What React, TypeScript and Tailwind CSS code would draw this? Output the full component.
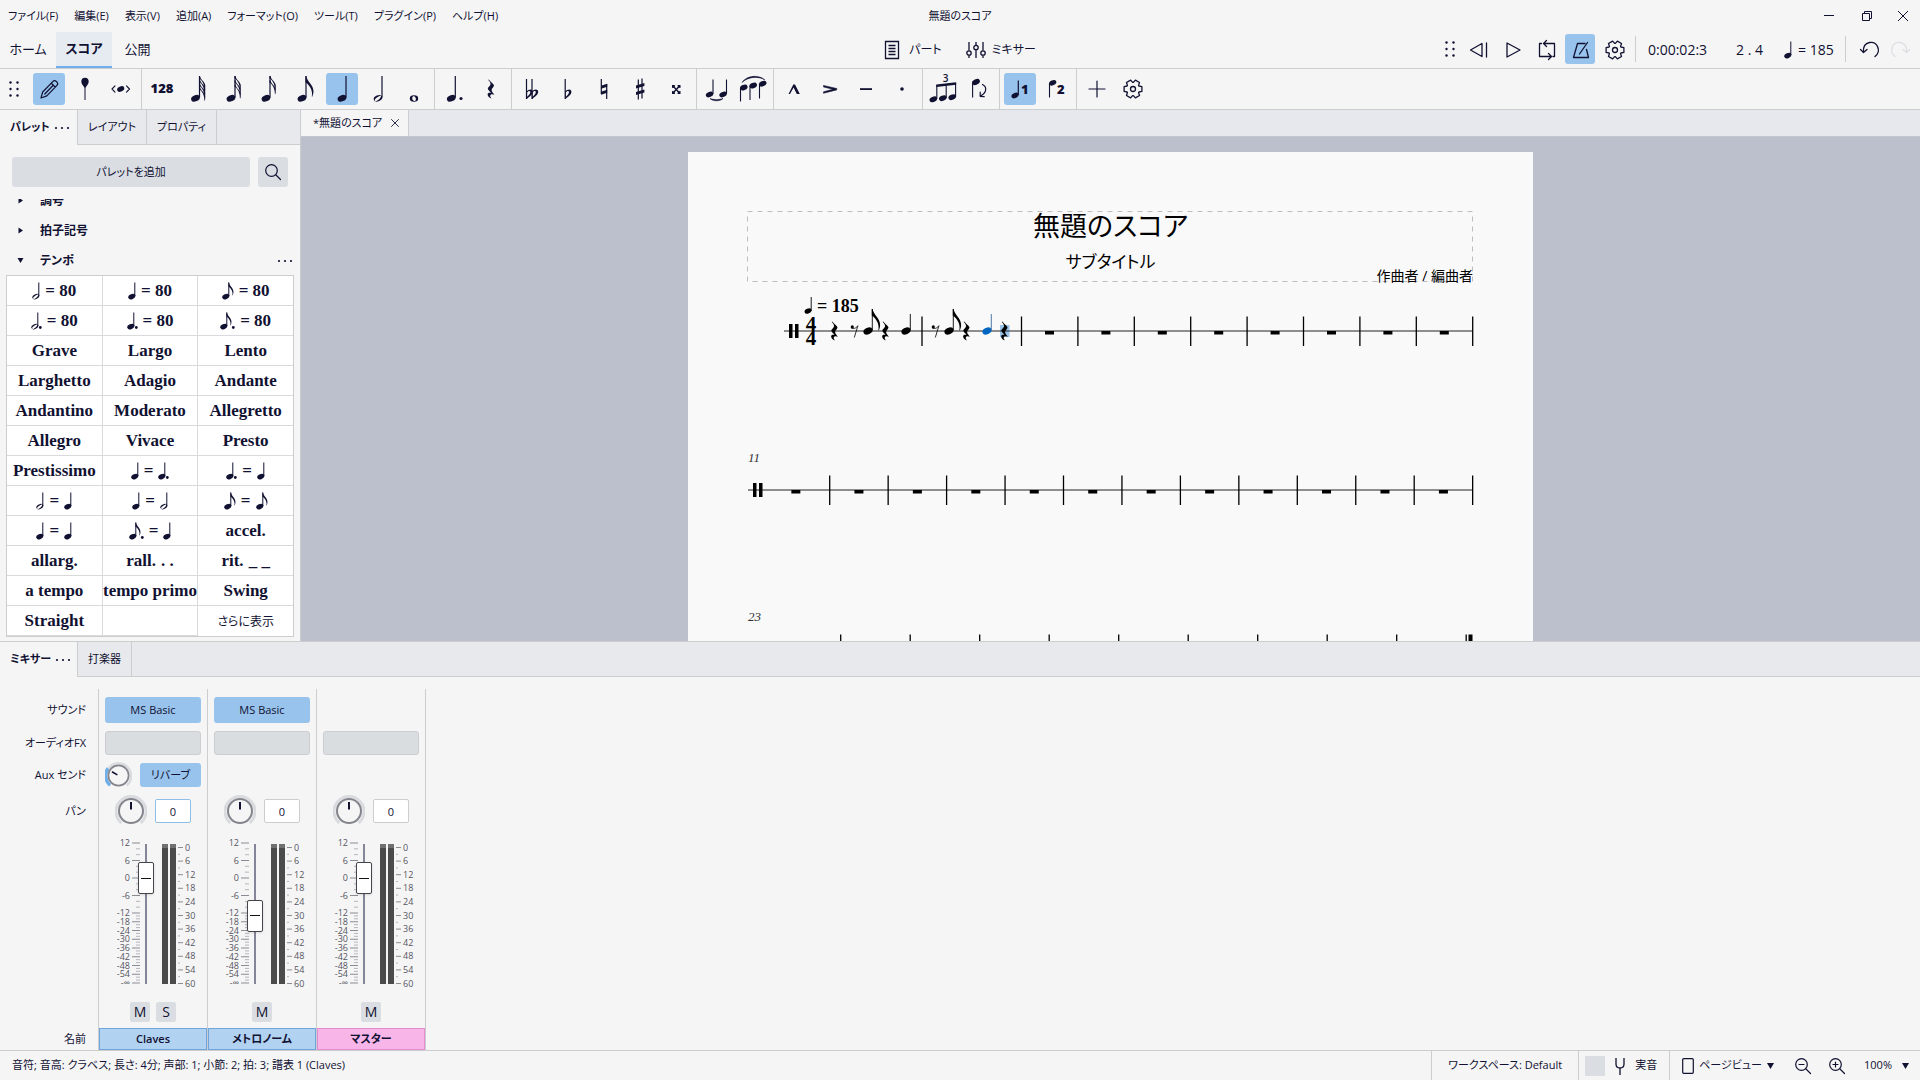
import React from 'react';
import { X } from 'lucide-react';

type NoteKind = 'whole' | 'half' | 'quarter' | 'eighth';

/* ---------- music glyphs ---------- */

const Head = ({ x, y, s = 1, open = false }: { x: number; y: number; s?: number; open?: boolean }) => (
  <g transform={`translate(${x} ${y}) rotate(-24) scale(${s})`}>
    {open ? (
      <path fillRule="evenodd" d="M-4.7 0a4.7 3.1 0 1 0 9.4 0a4.7 3.1 0 1 0 -9.4 0ZM-3.9 .5C-3.9 -.8 2 -2 3.7 -1.3C4.6 .4 -2.4 3 -3.7 1.7Z" />
    ) : (
      <ellipse rx="4.8" ry="3.2" />
    )}
  </g>
);

const Stem = ({ x, y1, y2, w = 1.2 }: { x: number; y1: number; y2: number; w?: number }) => (
  <path d={`M${x} ${y1}V${y2}`} stroke="currentColor" strokeWidth={w} fill="none" />
);

const Flag = ({ x, y, s = 1 }: { x: number; y: number; s?: number }) => (
  <path
    transform={`translate(${x} ${y}) scale(${s})`}
    d="M-.5 0H.4C.8 5.5 7.800 9 7.800 16C7.800 18 7.200 20 6.500 21.500L6 21.300C7.200 16.500 5 10.500 -.5 6.500Z"
  />
);

const QuarterRest = ({ x, y, s = 1 }: { x: number; y: number; s?: number }) => (
  <path
    transform={`translate(${x} ${y}) scale(${s})`}
    d="M-2.200 -9.500C-1 -7.500 3 -4.800 3 -3.600C3 -2 .6 -1 .6 1C.6 3 3 4.800 3.400 5.800C1.500 4.900 -.8 5 -.8 6.900C-.8 8 .2 8.900 .8 9.600C-1.500 9 -3.400 7.300 -3.400 5.300C-3.400 3.900 -2 3.300 0 3.800C-1 2.500 -3.200 .8 -3.200 -.6C-3.200 -2 -.4 -3 -.4 -5C-.4 -6.500 -1.800 -8 -2.800 -9Z"
  />
);

const EighthRest = ({ x, y }: { x: number; y: number }) => (
  <g transform={`translate(${x} ${y})`}>
    <circle cx="-2.200" cy="-3.600" r="1.600" />
    <path d="M-3.400 -2.800C-1.500 -1.200 1.500 -2 3.400 -4.800L-.2 7" fill="none" stroke="currentColor" strokeWidth=".8" />
  </g>
);

const InlineNote = ({ kind, dot = false }: { kind: NoteKind; dot?: boolean }) => {
  const w = (kind === 'eighth' ? 12 : 8) + (dot ? 3 : 0);
  return (
    <svg width={w} height="18" viewBox={`0 0 ${w} 18`} fill="currentColor" className="shrink-0">
      <Head x={3.8} y={14.6} s={0.78} open={kind === 'half'} />
      <Stem x={6.8} y1={0.5} y2={14} w={1} />
      {kind === 'eighth' && <Flag x={6.8} y={0.5} s={0.6} />}
      {dot && <circle cx={w - 1.7} cy="15.500" r="1.400" />}
    </svg>
  );
};

/* ---------- toolbar icons, all on a 32px box ---------- */

const Icon = ({ children }: { children: React.ReactNode }) => (
  <svg width="32" height="32" viewBox="0 0 32 32" fill="currentColor" className="overflow-visible">
    {children}
  </svg>
);

const Line = ({ d, w = 1.3 }: { d: string; w?: number }) => (
  <path d={d} fill="none" stroke="currentColor" strokeWidth={w} strokeLinecap="round" strokeLinejoin="round" />
);

const Flagged = ({ flags }: { flags: number }) => {
  const x = flags > 3 ? 17.5 : flags > 2 ? 17 : 16;
  const step = flags > 3 ? 3.6 : 4.2;
  return (
    <Icon>
      <Head x={x - 4} y={25.3} s={0.95} />
      <Stem x={x} y1={3} y2={24.5} />
      {flags === 1 ? (
        <Flag x={x} y={3} s={0.96} />
      ) : (
        Array.from({ length: flags }, (_, i) => (
          <path
            key={i}
            transform={`translate(${x} ${3 + i * step})`}
            d="M-.5 0H.5C1 4 5.500 5.500 5.800 9.500C5.900 11 5.700 12.500 5.400 14L4.900 13.800C5 9 3 4.500 -.5 2.200Z"
          />
        ))
      )}
    </Icon>
  );
};

const gearPath = (r: number) => {
  const pts: string[] = [];
  for (let k = 0; k < 6; k++) {
    [[-27, 0.72], [-15, 1], [15, 1], [27, 0.72]].forEach(([a, f]) => {
      const t = ((k * 60 + a) * Math.PI) / 180;
      pts.push(`${(16 + r * f * Math.cos(t)).toFixed(2)} ${(16 + r * f * Math.sin(t)).toFixed(2)}`);
    });
  }
  return `M${pts.join('L')}Z`;
};

const GearIcon = () => (
  <Icon>
    <Line d={gearPath(9.2)} />
    <circle cx="16" cy="16" r="2.500" fill="none" stroke="currentColor" strokeWidth="1.300" />
  </Icon>
);

const Flat = ({ x }: { x: number }) => (
  <g transform={`translate(${x} 0)`}>
    <path d="M0 6V26" stroke="currentColor" strokeWidth="1.200" />
    <path fillRule="evenodd" d="M0 18.500C2 16.200 6 15.500 6.200 18.800C6.300 21.800 3 23.500 0 26.200ZM.6 19.500V23.800C2.500 22 4 20.500 3.800 18.800C3.500 17.200 1.500 18 .6 19.500Z" />
  </g>
);

const durationIcons: [string, React.ReactNode][] = [
  ['64分音符', <Flagged flags={4} />],
  ['32分音符', <Flagged flags={3} />],
  ['16分音符', <Flagged flags={2} />],
  ['8分音符', <Flagged flags={1} />],
  ['4分音符', <Icon><Head x={16} y={25.300} s={0.95} /><Stem x={20} y1={3} y2={24.500} /></Icon>],
  ['2分音符', <Icon><Head x={16} y={25.300} s={0.95} open /><Stem x={20} y1={3} y2={24.500} /></Icon>],
  ['全音符', <Icon><path fillRule="evenodd" d="M11.800 25.500a4.200 3.200 0 1 0 8.400 0a4.200 3.200 0 1 0 -8.400 0ZM14.300 24.500C14.800 22.500 17 23 17.700 25C18.300 27 17.500 28.200 16.300 28C14.800 27.700 14 26 14.300 24.500Z" /></Icon>],
];

const dotIcons: [string, React.ReactNode][] = [
  ['付点', <Icon><Head x={12.300} y={25.300} s={0.95} /><Stem x={16.300} y1={3} y2={24.500} /><circle cx="22" cy="25.500" r="1.600" /></Icon>],
  ['休符', <Icon><QuarterRest x={16} y={16} /></Icon>],
];

const accidentalIcons: [string, React.ReactNode][] = [
  ['ダブルフラット', <Icon><Flat x={10.500} /><Flat x={16} /></Icon>],
  ['フラット', <Icon><Flat x={13.200} /></Icon>],
  ['ナチュラル', <Icon><path d="M13.300 6V21M18.700 11V26" stroke="currentColor" strokeWidth="1.200" /><path d="M13 12.800L19.200 10.800V13.800L13 15.800ZM13 18.800L19.200 16.800V19.800L13 21.800Z" /></Icon>],
  ['シャープ', <Icon><path d="M14.300 6.500V26.500M18 5.500V25.500" stroke="currentColor" strokeWidth="1.200" /><path d="M12 12.600L20.400 10V13L12 15.600ZM12 19L20.400 16.400V19.400L12 22Z" /></Icon>],
  ['ダブルシャープ', <Icon><path d="M13 13L19.500 20M19.500 13L13 20" stroke="currentColor" strokeWidth="1.400" /><path d="M12 12H15L14.500 14.500L12 15ZM20.500 12H17.500L18 14.500L20.500 15ZM12 21H15L14.500 18.500L12 18ZM20.500 21H17.500L18 18.500L20.500 18Z" /></Icon>],
];

const slurIcons: [string, React.ReactNode][] = [
  ['タイ', <Icon><Head x={8.500} y={21.500} s={0.8} /><Stem x={12} y1={6.500} y2={21} w={1.100} /><Head x={22} y={21.500} s={0.8} /><Stem x={25.500} y1={6.500} y2={21} w={1.100} /><path d="M9 25.500C12 28.500 19 28.500 22 25.500C19 27 12 27 9 25.500Z" stroke="currentColor" strokeWidth=".6" /></Icon>],
  ['スラー', <Icon><Head x={6.800} y={14.500} s={0.82} /><Stem x={3.500} y1={15} y2={28.500} w={1.100} /><Head x={16.200} y={12.500} s={0.82} /><Stem x={13} y1={13} y2={27} w={1.100} /><Head x={25.700} y={10.700} s={0.82} /><Stem x={22.500} y1={11} y2={25.500} w={1.100} /><path d="M5 9.500C10 2 22 1.500 28 7C22 3 11 3.500 5 9.500Z" stroke="currentColor" strokeWidth=".5" /></Icon>],
];

const articulationIcons: [string, React.ReactNode][] = [
  ['マルカート', <Icon><path d="M10.500 21L15.300 11.600H17L21.800 21H18.800L15.600 14.600L12 21Z" /></Icon>],
  ['アクセント', <Icon><path d="M9.500 12.400L22.800 15.500V16.900L9.500 20.300V18.800L18.800 16.300L9.500 14Z" stroke="currentColor" strokeWidth=".5" /></Icon>],
  ['テヌート', <Icon><path d="M10 15.200H22V17H10Z" /></Icon>],
  ['スタッカート', <Icon><circle cx="16" cy="16" r="1.800" /></Icon>],
];

const tupletIcons: [string, React.ReactNode][] = [
  ['連符', (
    <Icon>
      <text x="18.500" y="9" textAnchor="middle" className="text-[10px] font-semibold">3</text>
      <Head x={6.300} y={26.300} s={0.82} /><Stem x={9.800} y1={12} y2={26} w={1.100} />
      <Head x={15.800} y={25.200} s={0.82} /><Stem x={19.200} y1={11} y2={25} w={1.100} />
      <Head x={25.200} y={24.200} s={0.82} /><Stem x={28.600} y1={10} y2={24} w={1.100} />
      <path d="M9.300 11.400L29.100 9.200V11.700L9.300 13.900Z" />
    </Icon>
  )],
  ['向きを反転', (
    <Icon>
      <Head x={13} y={9} s={0.85} /><Stem x={9.600} y1={9.500} y2={24.500} w={1.100} />
      <Line d="M19.500 11.500C24.500 14 23.500 20 17.500 23M17.200 19V23.300L21.200 23.600" w={1.200} />
    </Icon>
  )],
];

const voiceIcons: [string, React.ReactNode][] = [
  ['声部1', <Icon><Head x={11} y={22.500} s={0.78} /><Stem x={14.300} y1={7.500} y2={22} w={1.200} /><text x="17" y="21" className="text-[13px] font-extrabold">1</text></Icon>],
  ['声部2', <Icon><Head x={12.700} y={9.800} s={0.78} /><Stem x={9.500} y1={10} y2={24.500} w={1.100} /><text x="17" y="21" className="text-[13px] font-extrabold">2</text></Icon>],
];

const inputIcons: [string, React.ReactNode][] = [
  ['音符入力', <Icon><Line d="M8 25L9.700 19L20 8.400Q21.500 6.900 23.600 8.700Q25.600 10.700 24 12.300L13.800 22.900ZM18.300 10.200L22.200 14M11.800 21L20 12.500" w={1.200} /></Icon>],
  ['入力モード', <Icon><path d="M12.300 8.700A3.700 3.900 0 0 1 19.700 8.700C19.700 11 17.800 12.500 16.700 14.500H15.300C14.200 12.500 12.300 11 12.300 8.700Z" /><path d="M16 13V27" stroke="currentColor" strokeWidth="1" /></Icon>],
  ['リズム', <Icon><Line d="M10 12.800L7 16L10 19.200M21.500 12.800L24.500 16L21.500 19.200" w={1.100} /><Head x={15.700} y={16} s={0.78} /></Icon>],
];

/* ---------- shared bits ---------- */

const ToolGroup = ({ items, active }: { items: [string, React.ReactNode][]; active?: number }) => (
  <div className="flex items-center gap-1 px-1 border-r border-[#cbcdcf] h-full">
    {items.map(([label, icon], i) => (
      <button key={label} aria-label={label} className={`size-8 rounded-[3px] ${i === active ? 'bg-[#97c3ec]' : ''}`}>
        {icon}
      </button>
    ))}
  </div>
);

const Grip = () => (
  <svg width="10" height="16" viewBox="0 0 10 16" fill="currentColor">
    {[1.5, 8, 14.5].map((y) => [1.5, 8.5].map((x) => <circle key={`${x}-${y}`} cx={x} cy={y} r="1.200" />))}
  </svg>
);

const Dots = () => (
  <svg width="16" height="4" viewBox="0 0 16 4" fill="currentColor" className="shrink-0">
    <circle cx="2" cy="2" r="1.100" /><circle cx="8" cy="2" r="1.100" /><circle cx="14" cy="2" r="1.100" />
  </svg>
);

const Tri = () => (
  <svg width="7" height="6" viewBox="0 0 7 6" fill="currentColor"><path d="M0 0H7L3.500 6Z" /></svg>
);

const Magnifier = ({ sign }: { sign?: 'plus' | 'minus' }) => (
  <svg width="18" height="18" viewBox="0 0 18 18" fill="none" stroke="currentColor" strokeWidth="1.200" strokeLinecap="round">
    <circle cx="7.500" cy="7.500" r="5.800" />
    <path d="M12 12L16.500 16.500" />
    {sign && <path d="M5 7.500H10" />}
    {sign === 'plus' && <path d="M7.500 5V10" />}
  </svg>
);

/* ---------- header ---------- */

const menus = ['ファイル(F)', '編集(E)', '表示(V)', '追加(A)', 'フォーマット(O)', 'ツール(T)', 'プラグイン(P)', 'ヘルプ(H)'];

const TitleBar = () => (
  <header className="h-8 grid grid-cols-[1fr_auto_1fr] items-center text-[11px]">
    <nav className="flex">
      {menus.map((m) => (
        <button key={m} className="px-2 whitespace-nowrap">{m}</button>
      ))}
    </nav>
    <h1>無題のスコア</h1>
    <div className="flex justify-end">
      <button aria-label="最小化" className="w-[38px] grid place-items-center"><svg width="12" height="12" viewBox="0 0 12 12"><path d="M1 5.500H11" stroke="currentColor" /></svg></button>
      <button aria-label="元に戻す" className="w-[38px] grid place-items-center"><svg width="12" height="12" viewBox="0 0 12 12" fill="none" stroke="currentColor"><path d="M1.500 3.500H8.500V10.500H1.500ZM3.500 3.500V1.500H10.500V8.500H8.500" /></svg></button>
      <button aria-label="閉じる" className="w-[34px] grid place-items-center"><svg width="12" height="12" viewBox="0 0 12 12" stroke="currentColor"><path d="M1 1L11 11M11 1L1 11" /></svg></button>
    </div>
  </header>
);

const transport: [string, React.ReactNode][] = [
  ['巻き戻し', <Icon><Line d="M19 9.500V22.500L7.500 16ZM23.500 9V23" /></Icon>],
  ['再生', <Icon><Line d="M10 9V23L23 16Z" /></Icon>],
  ['ループ', <Icon><Line d="M10.500 9.500H8.500V22.500H19M22 22.500H23.500V9.500H12.500M15.500 6.500L12.500 9.500L15.500 12.500M17.500 19.500L20.500 22.500L17.500 25.500" /></Icon>],
  ['メトロノーム', <Icon><Line d="M20 9.500H12.500L8.500 23.500H23.500L21.500 15.500M14.500 20L22.500 8.500" /></Icon>],
  ['再生設定', <GearIcon />],
];

const MainBar = () => (
  <div className="h-[37px] grid grid-cols-[1fr_auto_1fr] border-b border-[#cbcdcf] text-[13px]">
    <div className="flex">
      <button className="w-14">ホーム</button>
      <button className="w-14 bg-[#e6ebf2] font-bold border-b-2 border-[#70afea]">スコア</button>
      <button className="w-[51px]">公開</button>
    </div>
    <div className="flex items-center gap-6 text-xs">
      <button className="flex items-center gap-[9px]">
        <svg width="16" height="20" viewBox="0 0 16 20" fill="none" stroke="currentColor" strokeWidth="1.300"><path d="M1.500 1.500H14.500V18.500H1.500ZM4.500 5.500H11.500M4.500 8.500H11.500M4.500 11.500H11.500M4.500 14.500H11.500" /></svg>
        パート
      </button>
      <button className="flex items-center gap-[6px]">
        <svg width="20" height="20" viewBox="0 0 20 20" fill="none" stroke="currentColor" strokeWidth="1.300"><path d="M3 2V10.500M3 15.500V18M10 2V5M10 10V18M17 2V10.500M17 15.500V18" /><circle cx="3" cy="13" r="2.200" /><circle cx="10" cy="7.500" r="2.200" /><circle cx="17" cy="13" r="2.200" /></svg>
        ミキサー
      </button>
    </div>
    <div className="flex items-center justify-end pr-[6px] pb-[2px]">
      <Grip />
      <div className="flex gap-1 ml-2 mr-[6px]">
        {transport.map(([label, icon]) => (
          <button key={label} aria-label={label} className={`size-[30px] grid place-items-center rounded-[3px] ${label === 'メトロノーム' ? 'bg-[#97c3ec]' : ''}`}>
            {icon}
          </button>
        ))}
      </div>
      <div className="h-[26px] border-l border-[#cbcdcf] flex items-center pl-3 pt-[2px] text-sm">
        <span className="w-[88px]">0:00:02:3</span>
        <span className="w-12 whitespace-pre">2 . 4</span>
        <span className="flex items-center gap-[6px] w-[61px] whitespace-nowrap"><InlineNote kind="quarter" />= 185</span>
      </div>
      <div className="h-[26px] border-l border-[#cbcdcf] flex items-center pl-2">
        <button aria-label="取り消し" className="size-[30px] grid place-items-center"><Icon><Line d="M21 22.500C28 17 23 7 15.500 8.500C11.500 9.300 9 12.500 9.500 18M6.500 15.500L9.500 18.500L13 15.500" /></Icon></button>
        <button aria-label="やり直し" className="size-[30px] grid place-items-center text-[#dedfe3]"><Icon><Line d="M11 22.500C4 17 9 7 16.500 8.500C20.500 9.300 23 12.500 22.500 18M25.500 15.500L22.500 18.500L19 15.500" /></Icon></button>
      </div>
    </div>
  </div>
);

const NoteBar = () => (
  <div className="h-[41px] flex items-center border-b border-[#cbcdcf]">
    <div className="pl-[9px] pr-[10px]"><Grip /></div>
    <ToolGroup items={inputIcons} active={0} />
    <div className="flex items-center h-full">
      <button className="w-8 ml-1 text-[13px] font-extrabold">128</button>
      <ToolGroup items={durationIcons} active={4} />
    </div>
    <ToolGroup items={dotIcons} />
    <ToolGroup items={accidentalIcons} />
    <ToolGroup items={slurIcons} />
    <ToolGroup items={articulationIcons} />
    <ToolGroup items={tupletIcons} />
    <ToolGroup items={voiceIcons} active={0} />
    <div className="flex gap-1 px-1">
      <button aria-label="追加" className="size-8"><Icon><Line d="M16 8V24M8 16H24" w={1.200} /></Icon></button>
      <button aria-label="ツールバー設定" className="size-8"><GearIcon /></button>
    </div>
  </div>
);

/* ---------- palettes ---------- */

type Part = string | { n: NoteKind; dot?: boolean };
const q: Part = { n: 'quarter' };
const qd: Part = { n: 'quarter', dot: true };
const h: Part = { n: 'half' };
const e: Part = { n: 'eighth' };

const tempoCells: Part[][] = [
  [h, '= 80'], [q, '= 80'], [e, '= 80'],
  [{ n: 'half', dot: true }, '= 80'], [qd, '= 80'], [{ n: 'eighth', dot: true }, '= 80'],
  ['Grave'], ['Largo'], ['Lento'],
  ['Larghetto'], ['Adagio'], ['Andante'],
  ['Andantino'], ['Moderato'], ['Allegretto'],
  ['Allegro'], ['Vivace'], ['Presto'],
  ['Prestissimo'], [q, '=', qd], [qd, '=', q],
  [h, '=', q], [q, '=', h], [e, '=', e],
  [q, '=', q], [{ n: 'eighth', dot: true }, '=', q], ['accel.'],
  ['allarg.'], ['rall.', '. .'], ['rit.', '_ _'],
  ['a tempo'], ['tempo primo'], ['Swing'],
  ['Straight'], [],
];

const PanelTabs = ({ tabs }: { tabs: string[] }) => (
  <div className="h-[35px] flex bg-[#e7e9ec] text-[11px]">
    {tabs.map((t, i) =>
      i === 0 ? (
        <div key={t} className="w-[78px] pl-[10px] flex items-center gap-1 bg-[#f5f5f6] border-r border-[#cbcdcf] whitespace-nowrap">
          <button className="font-bold">{t}</button>
          <button aria-label="パネルメニュー"><Dots /></button>
        </div>
      ) : (
        <button key={t} className="px-[10px] border-r border-b border-[#cbcdcf]">{t}</button>
      ),
    )}
    <div className="flex-1 border-b border-[#cbcdcf]" />
  </div>
);

const Palettes = () => (
  <aside className="w-[301px] shrink-0 flex flex-col border-r border-[#cbcdcf]">
    <PanelTabs tabs={['パレット', 'レイアウト', 'プロパティ']} />
    <div className="flex gap-2 px-3 pt-3 text-[11px]">
      <button className="flex-1 h-[30px] rounded-[3px] bg-[#dadee2]">パレットを追加</button>
      <button aria-label="検索" className="size-[30px] rounded-[3px] bg-[#dadee2] grid place-items-center"><Magnifier /></button>
    </div>
    <div className="flex-1 min-h-0 mt-3 px-[6px] overflow-hidden">
      <div className="-mt-[14px] text-xs font-bold">
        {['調号', '拍子記号', 'テンポ'].map((name) => (
          <div key={name} className="h-[30px] flex items-center pt-px pl-[11px] pr-[1px]">
            <button className="flex items-center gap-4">
              <svg width="7" height="7" viewBox="0 0 7 7" fill="currentColor">
                <path d={name === 'テンポ' ? 'M.5 1H6.500L3.500 6Z' : 'M1.500 .5L6 3.500L1.500 6.500Z'} />
              </svg>
              {name}
            </button>
            {name === 'テンポ' && <button aria-label="パレットメニュー" className="ml-auto"><Dots /></button>}
          </div>
        ))}
      </div>
      <div className="grid grid-cols-3 gap-px bg-[#d9dadc] border border-[#cbcdcf] font-['Liberation_Serif',serif] font-bold text-[17px] leading-5">
        {tempoCells.map((parts, i) => (
          <button key={i} aria-label={parts.length ? undefined : '空のセル'} className="h-[29px] pt-px bg-white flex items-center justify-center gap-[5px] whitespace-nowrap">
            {parts.map((p, j) => (typeof p === 'string' ? <span key={j}>{p}</span> : <InlineNote key={j} kind={p.n} dot={p.dot} />))}
          </button>
        ))}
        <button className="h-[30px] pt-px bg-white font-['Open_Sans','Noto_Sans_CJK_JP',sans-serif] font-normal text-xs">さらに表示</button>
      </div>
    </div>
  </aside>
);

/* ---------- score ---------- */

const MeasureRest = ({ x }: { x: number }) => <rect x={x - 4.5} y="49" width="9" height="3.500" />;
const Bar = ({ x }: { x: number }) => <path d={`M${x} 34.500V64`} stroke="currentColor" strokeWidth="1.300" />;

const System = ({ children, start = 0 }: { children: React.ReactNode; start?: number }) => (
  <svg viewBox="0 0 725 159" className="block w-full overflow-visible" fill="currentColor">
    <path d={`M${start} 49H725`} stroke="#222" strokeWidth="1" />
    <path d={`M${start + 5} 42h3.500v14h-3.500ZM${start + 11} 42h3.500v14h-3.500Z`} />
    {children}
  </svg>
);

const ScoreNote = ({ x, flag = false }: { x: number; flag?: boolean }) => (
  <>
    <Head x={x} y={49} />
    <Stem x={x + 4.3} y1={flag ? 27 : 32} y2={48} w={0.9} />
    {flag && <Flag x={x + 4.3} y={27} />}
  </>
);

const FirstSystem = () => (
  <System start={36}>
    <g transform="translate(60 29)">
      <Head x={0} y={0} s={0.75} /><Stem x={3.200} y1={-14} y2={0} w={0.9} />
    </g>
    <g className="font-['Liberation_Serif',serif] font-bold">
      <text x="69" y="30" className="text-[18px]">= 185</text>
      <text x="63" y="48.500" textAnchor="middle" className="text-[21px]">4</text>
      <text x="63" y="63" textAnchor="middle" className="text-[21px]">4</text>
    </g>
    <QuarterRest x={86.500} y={49} />
    <EighthRest x={106.500} y={48.500} />
    <ScoreNote x={120} flag />
    <QuarterRest x={137.500} y={49} />
    <ScoreNote x={158} />
    <Bar x={174} />
    <EighthRest x={187.500} y={48.500} />
    <ScoreNote x={201} flag />
    <QuarterRest x={218.500} y={49} />
    <g className="text-[#0065bf]">
      <g fill="currentColor"><Head x={239} y={49} /></g>
      <g className="text-[#3a6b9c]"><Stem x={243.300} y1={32} y2={48} w={0.9} /></g>
    </g>
    <rect x="252" y="43" width="9.500" height="12" fill="#9cc4ea" />
    <path d="M252 49H261.500" stroke="#222" />
    <QuarterRest x={256.500} y={49} />
    {Array.from({ length: 9 }, (_, i) => <Bar key={i} x={273.5 + i * 56.4} />)}
    {Array.from({ length: 8 }, (_, i) => <MeasureRest key={i} x={301.5 + i * 56.4} />)}
  </System>
);

const NumberedSystem = ({ number, bars, first, step, final = false }: { number: number; bars: number; first: number; step: number; final?: boolean }) => (
  <System>
    <text x="0" y="21" fill="#333" className="font-['Liberation_Serif',serif] italic text-[13px]">{number}</text>
    {Array.from({ length: bars }, (_, i) => (
      <React.Fragment key={i}>
        <Bar x={first + i * step} />
        <MeasureRest x={i === 0 ? (first + 14) / 2 : first + (i - 0.5) * step} />
      </React.Fragment>
    ))}
    {final && <rect x="720.500" y="34.500" width="4" height="29.500" />}
  </System>
);

const ScoreView = () => (
  <main className="flex-1 min-w-0 flex flex-col">
    <div className="h-[27px] flex bg-[#e6e8ed] border-b border-[#c3c6cc] text-[11px]">
      <div className="flex items-center gap-[6px] pl-3 pr-[6px] bg-[#f5f5f6] border-r border-[#cbcdcf]">
        <button>*無題のスコア</button>
        <button aria-label="タブを閉じる"><X size={14} strokeWidth={1.5} /></button>
      </div>
    </div>
    <div className="flex-1 min-h-0 overflow-hidden bg-[#bcc0cd] pt-[15px]">
      <article className="w-[845px] mx-auto bg-[#f9f9f9] text-black px-[60px] pt-[60px] pb-16">
        <div className="relative h-[70px] flex flex-col items-center">
          <svg className="absolute inset-0 size-full overflow-visible" fill="none" stroke="#bdbdbd" strokeDasharray="5 5">
            <rect x="-.5" y="-.5" width="100%" height="100%" />
          </svg>
          <h2 className="text-[27px] leading-7">無題のスコア</h2>
          <p className="text-[17px] leading-6 mt-[10px]">サブタイトル</p>
          <p className="absolute right-0 bottom-0 text-sm leading-3">作曲者 / 編曲者</p>
        </div>
        <FirstSystem />
        <NumberedSystem number={11} bars={12} first={81.7} step={58.45} />
        <NumberedSystem number={23} bars={10} first={92.7} step={69.5} final />
      </article>
    </div>
  </main>
);

/* ---------- mixer ---------- */

const Knob = ({ label, size, angle, filled = false }: { label: string; size: number; angle: number; filled?: boolean }) => (
  <label className="relative grid place-items-center">
    <svg width={size} height={size} viewBox="-16 -16 32 32" fill="none">
      <path d="M-9.700 12A15 15 0 1 1 9.700 12" stroke="#d9dbdf" strokeWidth="3" />
      {filled && <path d="M-10 11.500A15 15 0 0 1 -12.500 -8.500" stroke="#70afea" strokeWidth="4" />}
      <circle r="12" fill="#f5f5f6" stroke="#84848d" strokeWidth="2" />
      <path d="M0 -9V-1.500" stroke="#111132" strokeWidth="2" transform={`rotate(${angle})`} />
    </svg>
    <input type="range" aria-label={label} className="absolute inset-0 size-full opacity-0" />
  </label>
);

const leftLabels = ['12', '6', '0', '-6', '-12', '-18', '-24', '-30', '-36', '-42', '-48', '-54', '-∞'];
const leftY = (i: number) => 16 + (i < 5 ? i * 17.5 : 70 + (i - 4) * 8.75);

const Scale = () => (
  <svg width="108" height="172" viewBox="0 0 108 172" className="text-[9px]" fill="#55555f">
    {leftLabels.map((t, i) => {
      const y = leftY(i);
      const gap = (leftY(i + 1) - y) / 3;
      return (
        <g key={t}>
          <text x="31" y={y + 3} textAnchor="end">{t}</text>
          <path d={`M33 ${y}H41`} stroke="#8b8b93" />
          {i < 12 && <path d={`M37 ${y + gap}H41M37 ${y + gap * 2}H41`} stroke="#b5b6bb" />}
        </g>
      );
    })}
    <path d="M47 17V157" stroke="#85859a" strokeWidth="2" />
    <path d="M63 17H69V157H63ZM71 17H77V157H71Z" fill="#4b4b4b" />
    <path d="M63 17H69V21H63ZM71 17H77V21H71Z" fill="#707070" />
    {Array.from({ length: 11 }, (_, i) => {
      const y = 20.5 + i * 13.6;
      return (
        <g key={i}>
          <text x="86" y={y + 3}>{i * 6}</text>
          <path d={`M79 ${y}H84`} stroke="#8b8b93" />
          {i < 10 && <path d={`M79 ${y + 6.8}H81`} stroke="#b5b6bb" />}
        </g>
      );
    })}
  </svg>
);

interface Channel {
  name: string;
  sound?: string;
  aux?: boolean;
  solo?: boolean;
  focus?: boolean;
  level: number;
  master?: boolean;
}

const channels: Channel[] = [
  { name: 'Claves', sound: 'MS Basic', aux: true, solo: true, focus: true, level: 75 },
  { name: 'メトロノーム', sound: 'MS Basic', level: 48 },
  { name: 'マスター', level: 75, master: true },
];

const Strip = ({ c }: { c: Channel }) => (
  <section className="w-[109px] border-r border-[#cbcdcf] flex flex-col pt-2 text-[11px]">
    <div className="flex flex-col gap-2 px-[6px]">
      <div className="h-[26px]">
        {c.sound && <button className="size-full rounded-[3px] bg-[#97c3ec]">{c.sound}</button>}
      </div>
      <button aria-label={`${c.name} オーディオFX`} className="h-6 rounded-[3px] bg-[#dadde0] border border-[#cbcdd0]" />
      <div className="h-6 flex items-center justify-between">
        {c.aux && (
          <>
            <Knob label="リバーブ量" size={27} angle={-60} filled />
            <button className="h-full w-[61px] rounded-[3px] bg-[#97c3ec]">リバーブ</button>
          </>
        )}
      </div>
      <div className="h-8 flex items-center justify-end gap-2 pr-[10px]">
        <Knob label={`${c.name} パン`} size={32} angle={0} />
        <input
          aria-label={`${c.name} パン値`}
          defaultValue="0"
          className={`w-9 h-6 rounded-[2px] bg-white border text-center outline-none ${c.focus ? 'border-[#8fbfe8]' : 'border-[#cbcdcf]'}`}
        />
      </div>
    </div>
    <div className="relative h-[172px]">
      <Scale />
      <input
        type="range"
        aria-label={`${c.name} 音量`}
        defaultValue={c.level}
        className="absolute left-[39px] top-0 w-4 h-full appearance-none bg-transparent [writing-mode:vertical-lr] [direction:rtl] [&::-webkit-slider-thumb]:appearance-none [&::-webkit-slider-thumb]:w-4 [&::-webkit-slider-thumb]:h-8 [&::-webkit-slider-thumb]:rounded-[2px] [&::-webkit-slider-thumb]:border [&::-webkit-slider-thumb]:border-[#44444a] [&::-webkit-slider-thumb]:bg-white [&::-webkit-slider-thumb]:shadow [&::-webkit-slider-thumb]:bg-[linear-gradient(#111,#111)] [&::-webkit-slider-thumb]:bg-[length:10px_1px] [&::-webkit-slider-thumb]:bg-center [&::-webkit-slider-thumb]:bg-no-repeat"
      />
    </div>
    <div className="h-[29px] pb-[3px] flex items-center justify-center gap-[6px] text-sm">
      <button aria-label="ミュート" className="size-5 rounded-[2px] bg-[#dadee2] leading-5">M</button>
      {c.solo && <button aria-label="ソロ" className="size-5 rounded-[2px] bg-[#dadee2] leading-5">S</button>}
    </div>
    <h3 className={`h-[22px] border flex items-center justify-center font-semibold ${c.master ? 'bg-[#f8b5e8] border-[#e58bd0]' : 'bg-[#b2d2f1] border-[#70a5dc]'}`}>
      {c.name}
    </h3>
  </section>
);

const Mixer = () => (
  <section className="border-t border-[#cbcdcf]">
    <PanelTabs tabs={['ミキサー', '打楽器']} />
    <div className="flex pt-3">
      <div className="w-[99px] border-r border-[#cbcdcf] pr-3 pt-2 flex flex-col gap-2 text-[11px] text-right">
        <span className="h-[26px] leading-[26px]">サウンド</span>
        <span className="h-6 leading-6">オーディオFX</span>
        <span className="h-6 leading-6">Aux センド</span>
        <span className="h-8 leading-8">パン</span>
        <span className="mt-auto h-[22px] leading-[22px]">名前</span>
      </div>
      {channels.map((c) => <Strip key={c.name} c={c} />)}
    </div>
  </section>
);

const StatusBar = () => (
  <footer className="h-[30px] flex items-center justify-between border-t border-[#cbcdcf] text-[11px]">
    <p className="pl-3">音符; 音高: クラベス; 長さ: 4分; 声部: 1; 小節: 2; 拍: 3; 譜表 1 (Claves)</p>
    <div className="flex h-full">
      <button className="w-[147px] border-l border-[#cbcdcf]">ワークスペース: Default</button>
      <button className="w-[91px] border-l border-[#cbcdcf] flex items-center pl-[6px]">
        <span className="size-5 bg-[#dadee2] mr-2" />
        <svg width="14" height="20" viewBox="0 0 14 20" fill="none" stroke="currentColor" strokeWidth="1.300"><path d="M3 2V8Q3 12 7 12Q11 12 11 8V2M7 12V19" /></svg>
        <span className="ml-2">実音</span>
      </button>
      <div className="border-l border-[#cbcdcf] flex items-center pl-3 pr-[11px]">
        <button className="flex items-center">
          <svg width="12" height="16" viewBox="0 0 12 16" fill="none" stroke="currentColor" strokeWidth="1.200"><rect x=".7" y=".7" width="10.600" height="14.600" rx="1" /></svg>
          <span className="mx-[5px]">ページビュー</span>
          <Tri />
        </button>
        <button aria-label="縮小" className="ml-5"><Magnifier sign="minus" /></button>
        <button aria-label="拡大" className="ml-4"><Magnifier sign="plus" /></button>
        <button className="flex items-center gap-[10px] ml-[18px]">100% <Tri /></button>
      </div>
    </div>
  </footer>
);

export default function App() {
  return (
    <div className="h-screen flex flex-col overflow-hidden bg-[#f5f5f6] text-[#111132] font-['Open_Sans','Noto_Sans_CJK_JP',sans-serif] [font-feature-settings:'palt']">
      <TitleBar />
      <MainBar />
      <NoteBar />
      <div className="flex-1 min-h-0 flex">
        <Palettes />
        <ScoreView />
      </div>
      <Mixer />
      <StatusBar />
    </div>
  );
}
